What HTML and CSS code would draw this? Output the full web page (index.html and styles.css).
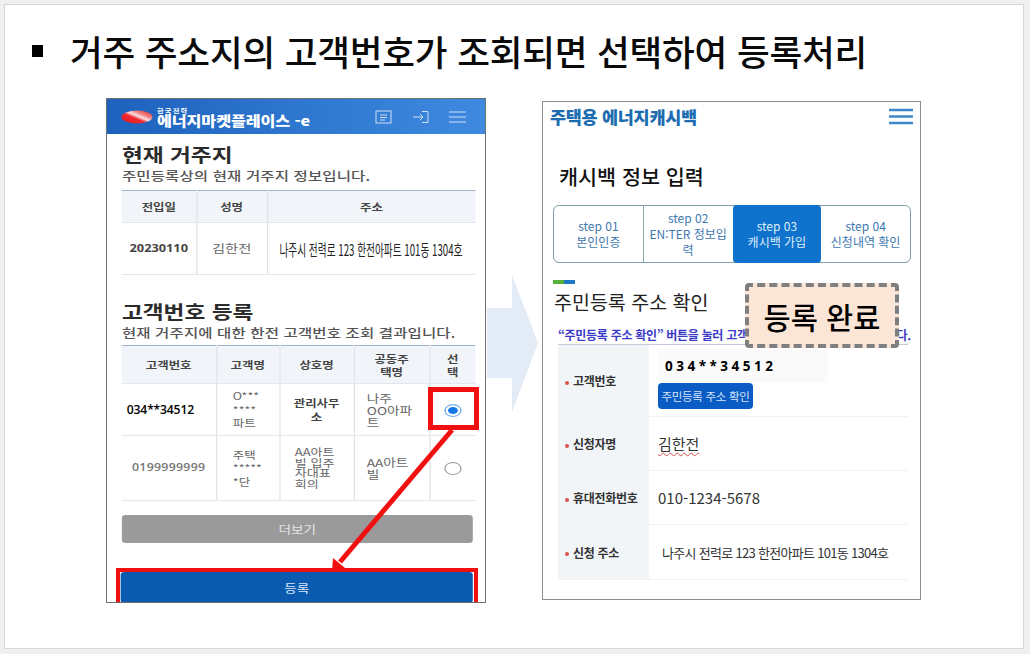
FILE: index.html
```html
<!DOCTYPE html>
<html lang="ko">
<head>
<meta charset="utf-8">
<title>등록처리</title>
<link rel="stylesheet" href="styles.css">
</head>
<body>
<main class="slide">
  <h1 class="slide-title"><span class="bullet"></span><span>거주 주소지의 고객번호가 조회되면 선택하여 등록처리</span></h1>
  <div class="panels">
    <section class="phone left">
      <header class="kepco">
        <svg class="kepco-logo" viewBox="0 0 32 16" width="32" height="16"><defs><linearGradient id="lg" x1="0" y1="1" x2="1" y2="0"><stop offset="0" stop-color="#e8141c"/><stop offset=".42" stop-color="#ee2a30"/><stop offset=".55" stop-color="#fbe3e3"/><stop offset=".7" stop-color="#f08080"/><stop offset="1" stop-color="#e01820"/></linearGradient></defs><ellipse cx="16" cy="8" rx="15.500" ry="6.500" fill="url(#lg)"/></svg>
        <div class="kepco-name"><small>한국전력</small><b>에너지마켓플레이스 -e</b></div>
        <div class="kepco-icons">
          <svg viewBox="0 0 18 14" width="18" height="14"><rect x="1" y="1" width="15" height="12" fill="none" stroke="#cfe0f6"/><path d="M5 5h7M5 7.500h7M5 10h5" stroke="#cfe0f6"/></svg>
          <svg viewBox="0 0 18 14" width="18" height="14"><path d="M1 7h10M8 4l3 3-3 3M10 1.500h6v11h-6" fill="none" stroke="#cfe0f6"/></svg>
          <svg viewBox="0 0 18 14" width="18" height="14"><path d="M0 2h17M0 7h17M0 12h17" stroke="#cfe0f6"/></svg>
        </div>
      </header>
      <div class="left-body">
        <h2 class="sec-title">현재 거주지</h2>
        <p class="sec-sub">주민등록상의 현재 거주지 정보입니다.</p>
        <table class="tbl tbl-a">
          <colgroup><col class="ca1"><col class="ca2"><col></colgroup>
          <thead><tr><th>전입일</th><th>성명</th><th>주소</th></tr></thead>
          <tbody><tr><td class="date">20230110</td><td class="soft">김한전</td><td><span class="addr">나주시 전력로 123 한전아파트 101동 1304호</span></td></tr></tbody>
        </table>
        <h2 class="sec-title second">고객번호 등록</h2>
        <p class="sec-sub">현재 거주지에 대한 한전 고객번호 조회 결과입니다.</p>
        <table class="tbl tbl-b">
          <colgroup><col class="cb1"><col class="cb2"><col class="cb3"><col class="cb4"><col></colgroup>
          <thead><tr><th>고객번호</th><th>고객명</th><th>상호명</th><th>공동주<br>택명</th><th>선<br>택</th></tr></thead>
          <tbody>
            <tr class="r1"><td class="num"><span class="num-in">034**34512</span></td><td class="name">O***<br>****<br>파트</td><td class="co">관리사무<br>소</td><td class="apt">나주<br>OO아파<br>트</td><td><span class="radio on"></span></td></tr>
            <tr class="r2"><td class="num2">0199999999</td><td class="name">주택<br>*****<br>*단</td><td class="apt tight">AA아트<br>빌 입주<br>자대표<br>회의</td><td class="apt">AA아트<br>빌</td><td><span class="radio"></span></td></tr>
          </tbody>
        </table>
        <div class="btn more">더보기</div>
        <div class="btn reg">등록</div>
      </div>
    </section>
    <svg class="big-arrow" viewBox="0 0 51 137" width="51" height="137"><path d="M0 33H25V0L51 68L25 137V103H0Z" fill="#e2ebf6"/></svg>
    <section class="phone right">
      <header class="cash-head">
        <b class="cash-logo">주택용 에너지캐시백</b>
        <svg viewBox="0 0 24 17" width="24" height="17"><path d="M0 2h24M0 8.500h24M0 15h24" stroke="#3f87cc" stroke-width="2.500"/></svg>
      </header>
      <h2 class="cash-title">캐시백 정보 입력</h2>
      <div class="steps">
        <div class="step">step 01<br>본인인증</div>
        <div class="step">step 02<br>EN:TER 정보입<br>력</div>
        <div class="step active">step 03<br>캐시백 가입</div>
        <div class="step last">step 04<br>신청내역 확인</div>
      </div>
      <div class="accent"><i></i><i></i></div>
      <h3 class="cash-sub">주민등록 주소 확인</h3>
      <p class="notice">“주민등록 주소 확인” 버튼을 눌러 고객번호에 해당하는 주소 확인합니다.</p>
      <div class="form">
        <div class="row r-a"><div class="lab">고객번호</div><div class="val"><div class="input">034**34512</div><div class="mini">주민등록 주소 확인</div></div></div>
        <div class="row r-b"><div class="lab">신청자명</div><div class="val"><span class="wavy">김한전</span></div></div>
        <div class="row r-c"><div class="lab">휴대전화번호</div><div class="val phone-no">010-1234-5678</div></div>
        <div class="row r-d"><div class="lab">신청 주소</div><div class="val small-addr">나주시 전력로 123 한전아파트 101동 1304호</div></div>
      </div>
      <div class="done">등록 완료</div>
    </section>
  </div>
  <div class="mark-radio"></div>
  <div class="mark-reg"></div>
  <svg class="mark-arrow" viewBox="0 0 140 150" width="140" height="150"><path d="M126 6 L14 138" stroke="#f01010" stroke-width="5" fill="none"/><path d="M6 148 L7 134 L19 144Z" fill="#f01010"/></svg>
</main>
</body>
</html>
```
FILE: styles.css
```css
* { box-sizing: border-box; }
html, body { margin: 0; height: 100%; }
body {
  width: 1030px;
  height: 654px;
  background: #f0f0f0;
  padding: 4px 6px 5px 4px;
  overflow: hidden;
  font-family: "Noto Sans CJK KR", "Noto Sans", sans-serif;
  color: #222;
}
.slide {
  position: relative;
  height: 645px;
  background: #fff;
  border: 1px solid #d6d6d6;
  padding: 0 0 0 27px;
}
.slide-title {
  margin: 0;
  height: 76px;
  padding-top: 16px;
  display: flex;
  align-items: center;
  gap: 27px;
  font-size: 35.600px;
  font-weight: 500;
  letter-spacing: -.2px;
  color: #0a0a0a;
  line-height: 1;
  white-space: nowrap;
}
.bullet { width: 11px; height: 12px; background: #000; flex: none; }
.panels { display: flex; align-items: flex-start; padding: 17px 0 0 74px; }
.phone { background: #fff; border: 1px solid #6e6e6e; width: 380px; flex: none; position: relative; overflow: hidden; }
.left { height: 505px; }
.big-arrow { flex: none; margin: 177px 0 0 1px; }
.right { width: 379px; height: 499px; margin: 3px 0 0 4px; border-color: #8c8c8c; }

/* left phone: the source capture is stretched sideways, so its body is too */
.kepco {
  height: 35px;
  display: flex;
  align-items: center;
  padding: 0 18px 0 14px;
  background: linear-gradient(90deg, #1d62bd, #3f8ae0);
  color: #fff;
}
.kepco-logo { flex: none; }
.kepco-name { margin-left: 4px; display: flex; flex-direction: column; line-height: 1; transform: scaleX(1.2); transform-origin: left center; white-space: nowrap; }
.kepco-name small { font-size: 6px; line-height: 7px; font-weight: 700; letter-spacing: 1px; }
.kepco-name b { font-size: 13.500px; line-height: 13px; font-weight: 900; letter-spacing: -.1px; }
.kepco-icons { margin-left: auto; display: flex; gap: 19px; align-items: center; }
.left-body { width: 305px; padding: 0 0 0 12px; transform: scaleX(1.24); transform-origin: left top; }
.sec-title { margin: 8px 0 0; font-size: 18.300px; line-height: 25px; font-weight: 700; color: #2b2b2b; white-space: nowrap; }
.sec-title.second { margin-top: 24px; }
.sec-sub { margin: 0; font-size: 12.500px; line-height: 17px; color: #555; font-weight: 500; letter-spacing: .1px; white-space: nowrap; }
.tbl { width: 285px; margin-top: 6px; border-collapse: collapse; table-layout: fixed; border-top: 1px solid #9db3c9; font-size: 10px; color: #444; text-align: center; }
.tbl th { background: #f1f5f9; font-weight: 700; font-size: 10px; line-height: 13px; padding: 0; color: #444; }
.tbl th, .tbl td { border-bottom: 1px solid #e3e6ea; border-right: 1px solid #dfe3e8; }
.tbl th:last-child, .tbl td:last-child { border-right: 0; }
.tbl td { padding: 0; line-height: 13.500px; }
.ca1 { width: 60px; }
.ca2 { width: 57px; }
.tbl-a thead tr { height: 32px; }
.tbl-a tbody tr { height: 52px; }
.date { font-weight: 700; font-size: 10.300px; font-family: "Open Sans", sans-serif; }
.soft { font-size: 11.500px; color: #666; }
.addr { display: block; width: 301px; margin-left: calc((100% - 303px) / 2); font-size: 16px; line-height: 18px; color: #222; white-space: nowrap; transform: scaleX(.488); }
.tbl-b { margin-top: 4px; }
.cb1 { width: 76px; }
.cb2 { width: 51px; }
.cb3 { width: 60px; }
.cb4 { width: 61px; }
.tbl-b thead tr { height: 38px; }
.r1 { height: 52px; }
.r2 { height: 65px; }
.num { text-align: left; padding-left: 4px !important; }
.num-in { display: inline-block; font-family: "Open Sans", sans-serif; font-weight: 600; font-size: 12.200px; color: #000; letter-spacing: -.2px; transform: scaleX(.806); transform-origin: left center; white-space: nowrap; }
.num2 { font-size: 10px; color: #777; font-family: "Open Sans", sans-serif; font-weight: 600; letter-spacing: .2px; }
.name { color: #666; font-size: 10px; text-align: left; padding-left: 13px !important; }
.co { font-weight: 700; font-size: 10px; }
.apt { color: #666; font-size: 11px; text-align: left; padding-left: 10px !important; line-height: 12px !important; }
.tight { padding-left: 12px !important; font-size: 10.500px; line-height: 10.500px !important; }
.radio { display: inline-block; width: 14px; height: 13px; border: 1px solid #999; border-radius: 50%; vertical-align: middle; }
.radio.on { border-color: #7db5ee; background: #1776e6; box-shadow: inset 0 0 0 2px #fff; }
.btn { display: flex; align-items: center; justify-content: center; font-size: 11px; border-radius: 3px; color: #e6e6e6; }
.more { width: 283px; height: 28px; margin-top: 14px; background: #9a9a9a; }
.reg { width: 284px; height: 31px; margin: 29px 0 0 -1px; background: #0a5bb0; color: #dbe8f6; }
.mark-radio { position: absolute; left: 423px; top: 382px; width: 51px; height: 43px; border: 5px solid #f01010; }
.mark-reg { position: absolute; left: 111px; top: 563px; width: 362px; height: 34px; border: 4px solid #f01010; border-bottom: 0; }
.mark-arrow { position: absolute; left: 321px; top: 419px; }

/* right phone */
.cash-head { height: 26px; padding: 0 7px 0 7px; margin-top: 1px; display: flex; align-items: center; justify-content: space-between; }
.cash-logo { color: #1c6cb0; font-size: 17.500px; font-weight: 900; letter-spacing: -.3px; }
.cash-title { margin: 32px 0 0 16px; font-size: 20.700px; line-height: 30px; font-weight: 500; color: #111; }
.steps { display: flex; height: 58px; margin: 14px 9px 0 10px; border: 1px solid #7fa0a8; border-radius: 6px; font-size: 12px; line-height: 16px; color: #3d78b0; text-align: center; }
.step { flex: 1 1 0; display: flex; align-items: center; justify-content: center; border-right: 1px solid #8aa; min-width: 0; }
.step:nth-child(2) { border-right: 0; }
.step.active { background: #0f72cc; color: #dfeefa; border: 0; border-radius: 4px; margin: -1px 0; }
.step.last { border: 0; }
.accent { display: flex; margin: 17px 0 0 10px; height: 4px; width: 22px; }
.accent i { flex: 1; background: #57b03a; }
.accent i + i { background: #1e78c8; }
.cash-sub { margin: 4px 0 0 11px; font-size: 19.500px; line-height: 27px; font-weight: 400; color: #222; }
.notice { margin: 12px 0 0 15px; font-size: 12px; line-height: 16px; font-weight: 700; color: #3a3ac8; white-space: nowrap; letter-spacing: -.3px; }
.form { margin: 1px 12px 0 15px; border-top: 1px solid #c6ccdc; }
.row { display: flex; border-bottom: 1px solid #f1f2f3; }
.r-a { height: 72px; }
.r-b { height: 54px; }
.r-c { height: 54px; }
.r-d { height: 55px; }
.lab { width: 91px; flex: none; background: #f1f5f8; display: flex; align-items: center; padding-left: 15px; font-size: 12px; font-weight: 700; color: #333; letter-spacing: -.3px; white-space: nowrap; position: relative; }
.lab::before { content: ""; position: absolute; left: 7px; top: 50%; width: 4px; height: 4px; background: #d9534f; border-radius: 50%; }
.val { padding-left: 9px; display: flex; align-items: center; font-size: 14px; color: #333; }
.r-a .val { flex-direction: column; align-items: flex-start; justify-content: flex-start; padding-top: 4px; }
.input { width: 170px; height: 34px; background: #fafafa; font-family: "Open Sans", sans-serif; font-weight: 700; font-size: 13.500px; letter-spacing: 3.500px; color: #000; padding: 5px 0 0 7px; line-height: 24px; white-space: nowrap; }
.mini { width: 95px; height: 26px; background: #0b5bc4; color: #d5e5f8; border-radius: 4px; font-size: 11.500px; display: flex; align-items: center; justify-content: center; letter-spacing: -.3px; white-space: nowrap; }
.wavy { text-decoration: underline wavy #d84a4a 1px; text-underline-offset: 2px; font-size: 15px; }
.phone-no { font-size: 15px; }
.small-addr { padding-left: 13px; font-size: 13px; letter-spacing: -.7px; white-space: nowrap; }
.done {
  position: absolute; left: 202px; top: 181px; width: 154px; height: 65px;
  background: #fbe5d6;
  border: 4px dashed #7f7f7f;
  border-radius: 4px;
  display: flex; align-items: center; justify-content: center;
  font-size: 29.500px; font-weight: 500; color: #000;
}
```
